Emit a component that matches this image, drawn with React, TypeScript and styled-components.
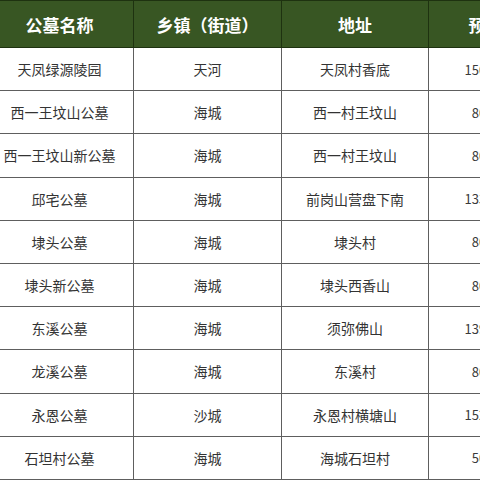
import React from "react";
import styled, { createGlobalStyle } from "styled-components";

const Global = createGlobalStyle`
  html, body { margin: 0; padding: 0; background: #ffffff; }
  body { width: 480px; height: 480px; overflow: hidden; }
`;

const Wrap = styled.div`
  width: 480px;
  height: 480px;
  overflow: hidden;
  background: #ffffff;
`;

const Table = styled.table`
  margin-left: -15px;
  border-collapse: collapse;
  table-layout: fixed;
  width: 591px;
  font-family: "Noto Sans CJK SC", "Microsoft YaHei", sans-serif;
`;

const HeadCell = styled.th<{ $w: number }>`
  width: ${(p) => p.$w}px;
  height: 47px;
  padding: 0;
  box-sizing: border-box;
  background: #385623;
  color: #ffffff;
  font-size: 17px;
  font-weight: 700;
  text-align: center;
  vertical-align: middle;
  border: 1px solid #1e3210;
  white-space: nowrap;
`;

const Row = styled.tr`
  height: 43.2px;
`;

const Cell = styled.td`
  padding: 0;
  color: #333333;
  font-size: 14px;
  text-align: center;
  vertical-align: middle;
  border: 1px solid #5e5e5e;
  white-space: nowrap;
`;

const NumCell = styled(Cell)`
  padding-right: 47px;
  color: #3a3a3a;
  font-size: 13px;
`;

const rows: [string, string, string, string][] = [
  ["天凤绿源陵园", "天河", "天凤村香底", "1500"],
  ["西一王坟山公墓", "海城", "西一村王坟山", "80"],
  ["西一王坟山新公墓", "海城", "西一村王坟山", "80"],
  ["邱宅公墓", "海城", "前岗山营盘下南", "1330"],
  ["埭头公墓", "海城", "埭头村", "80"],
  ["埭头新公墓", "海城", "埭头西香山", "80"],
  ["东溪公墓", "海城", "须弥佛山", "1390"],
  ["龙溪公墓", "海城", "东溪村", "80"],
  ["永恩公墓", "沙城", "永恩村横塘山", "1520"],
  ["石坦村公墓", "海城", "海城石坦村", "50"],
];

export default function App() {
  return (
    <Wrap>
      <Global />
      <Table>
        <thead>
          <tr>
            <HeadCell $w={148}>公墓名称</HeadCell>
            <HeadCell $w={148}>乡镇（街道）</HeadCell>
            <HeadCell $w={147}>地址</HeadCell>
            <HeadCell $w={148}>预留穴位</HeadCell>
          </tr>
        </thead>
        <tbody>
          {rows.map((r) => (
            <Row key={r[0]}>
              <Cell>{r[0]}</Cell>
              <Cell>{r[1]}</Cell>
              <Cell>{r[2]}</Cell>
              <NumCell>{r[3]}</NumCell>
            </Row>
          ))}
        </tbody>
      </Table>
    </Wrap>
  );
}
